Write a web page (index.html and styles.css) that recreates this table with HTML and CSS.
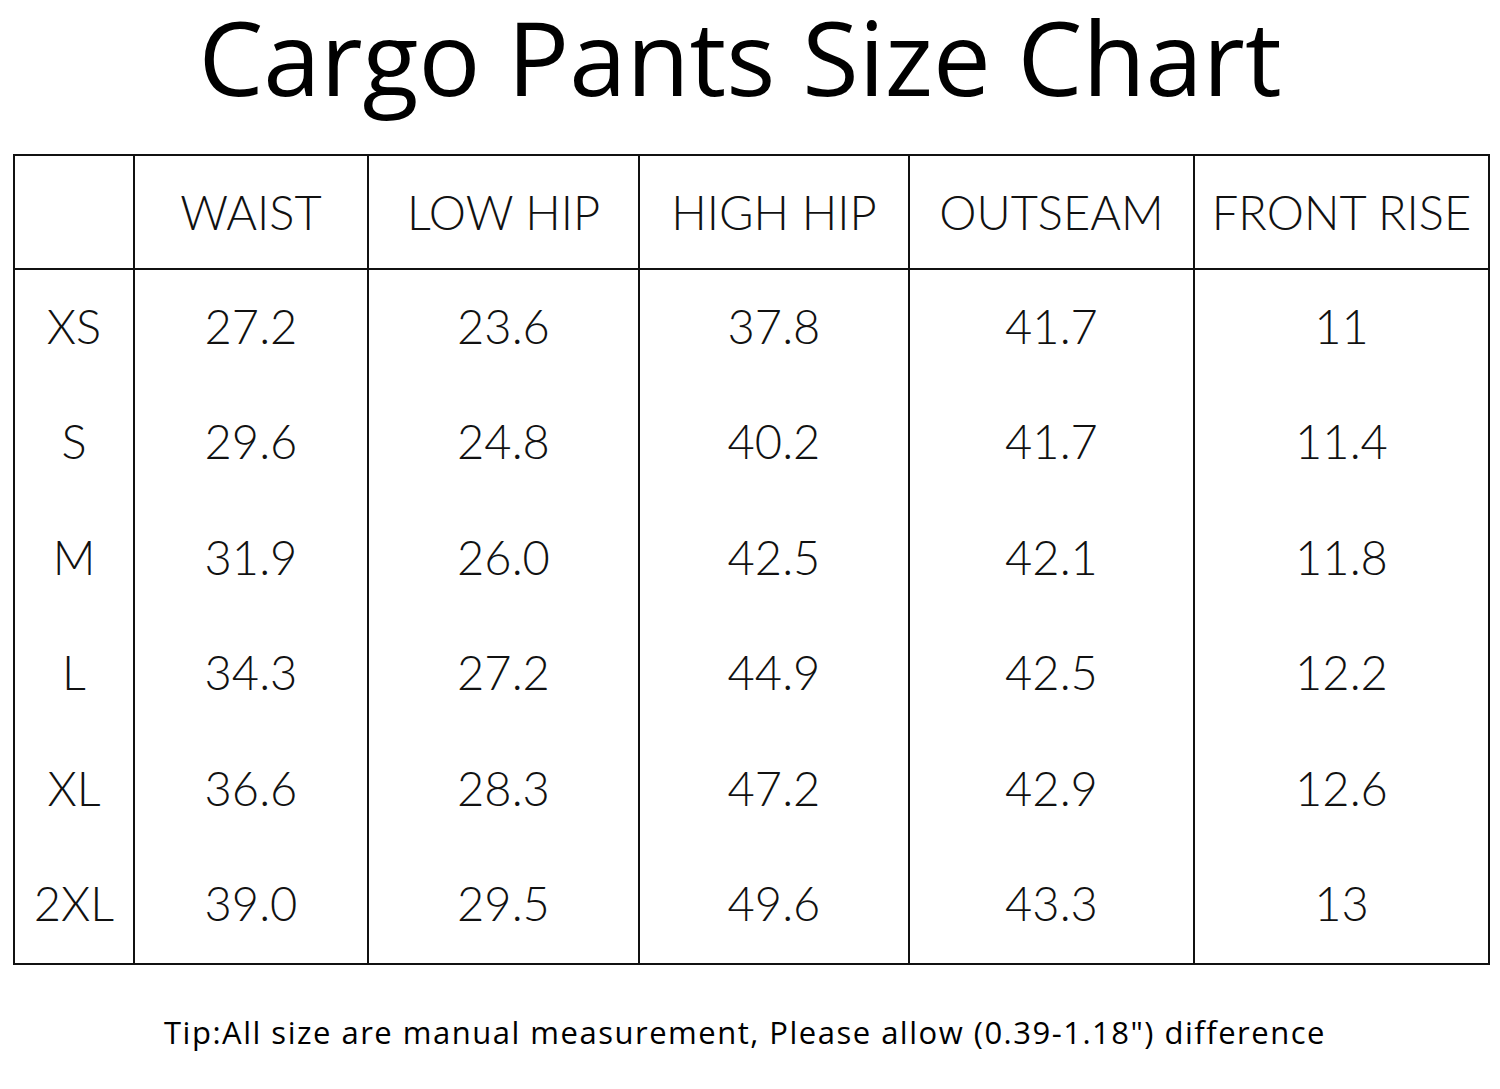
FILE: index.html
```html
<!DOCTYPE html>
<html>
<head>
<meta charset="utf-8">
<link rel="stylesheet" href="styles.css">
</head>
<body>
<div class="page">
  <h1 class="title">Cargo Pants Size Chart</h1>
  <table class="chart">
    <colgroup>
      <col class="c0"><col class="c1"><col class="c2"><col class="c3"><col class="c4"><col class="c5">
    </colgroup>
    <thead>
      <tr><th></th><th>WAIST</th><th>LOW HIP</th><th>HIGH HIP</th><th>OUTSEAM</th><th>FRONT RISE</th></tr>
    </thead>
    <tbody>
      <tr><td>XS</td><td>27.2</td><td>23.6</td><td>37.8</td><td>41.7</td><td>11</td></tr>
      <tr><td>S</td><td>29.6</td><td>24.8</td><td>40.2</td><td>41.7</td><td>11.4</td></tr>
      <tr><td>M</td><td>31.9</td><td>26.0</td><td>42.5</td><td>42.1</td><td>11.8</td></tr>
      <tr><td>L</td><td>34.3</td><td>27.2</td><td>44.9</td><td>42.5</td><td>12.2</td></tr>
      <tr><td>XL</td><td>36.6</td><td>28.3</td><td>47.2</td><td>42.9</td><td>12.6</td></tr>
      <tr><td>2XL</td><td>39.0</td><td>29.5</td><td>49.6</td><td>43.3</td><td>13</td></tr>
    </tbody>
  </table>
  <p class="tip">Tip:All size are manual measurement, Please allow (0.39-1.18") difference</p>
</div>
</body>
</html>
```
FILE: styles.css
```css
html, body {
  margin: 0;
  padding: 0;
  background: #ffffff;
}
.page {
  width: 1500px;
  height: 1089px;
  display: flex;
  flex-direction: column;
  align-items: flex-start;
}
.title {
  margin: 0;
  width: 1480px;
  height: 154px;
  padding-top: 0;
  font-family: "Open Sans", "Noto Sans", sans-serif;
  font-weight: 400;
  font-size: 103px;
  line-height: 112px;
  text-align: center;
  color: #000;
}
.chart {
  margin-left: 13px;
  width: 1477px;
  border-collapse: collapse;
  table-layout: fixed;
  font-family: "Lato", "Liberation Sans", sans-serif;
  font-weight: 300;
  font-size: 47px;
  color: #111;
}
.c0 { width: 120px; }
.c1 { width: 234px; }
.c2 { width: 271px; }
.c3 { width: 270px; }
.c4 { width: 285px; }
.c5 { width: 295px; }
.chart th, .chart td {
  border: 2.5px solid #111;
  text-align: center;
  padding: 0;
  font-weight: 300;
}
.chart th {
  height: 112px;
}
.chart td {
  height: 111.5px;
  padding-bottom: 4px;
  border-top: none;
  border-bottom: none;
}
.chart tbody tr:last-child td {
  border-bottom: 2.5px solid #111;
}
.tip {
  margin: 46px 0 0 0;
  width: 1490px;
  text-align: center;
  font-family: "Open Sans", "Noto Sans", sans-serif;
  font-size: 31px;
  letter-spacing: 1.5px;
  color: #000;
}
```
